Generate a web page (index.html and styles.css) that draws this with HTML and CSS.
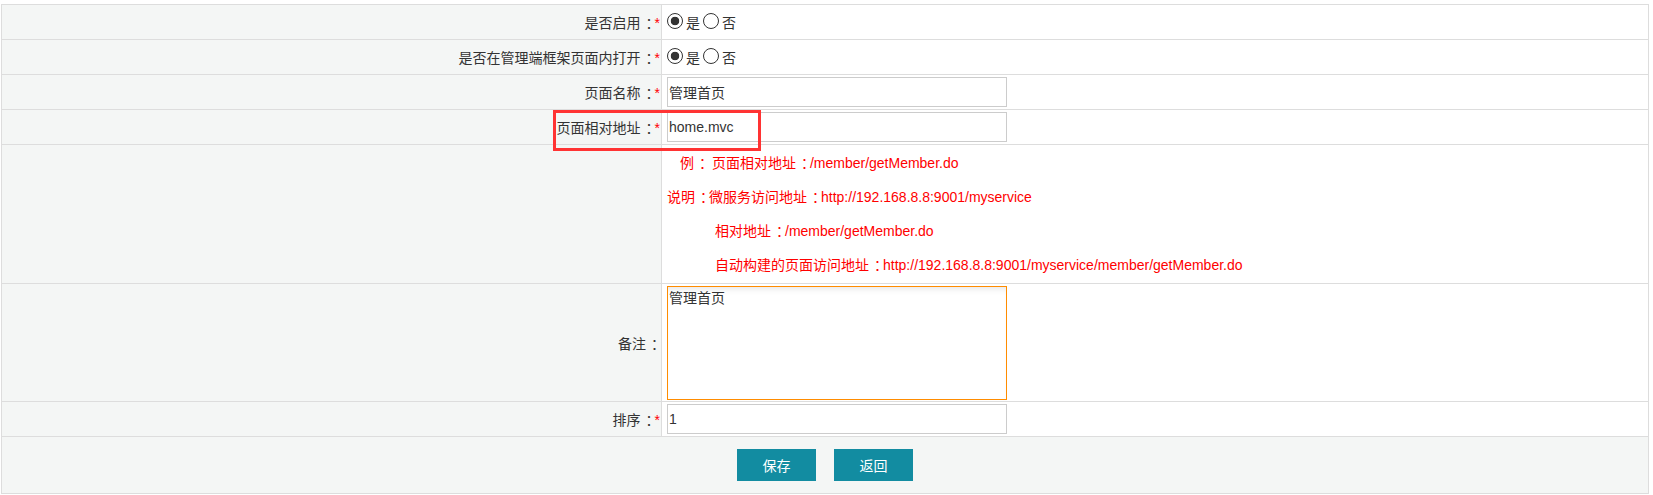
FILE: index.html
```html
<!DOCTYPE html>
<html lang="zh">
<head>
<meta charset="utf-8">
<title>页面编辑</title>
<link rel="stylesheet" href="styles.css">
</head>
<body>
<table class="form">
  <colgroup><col class="col-label"><col class="col-field"></colgroup>
  <tr>
    <th>是否启用<span class="c">：</span><em>*</em></th>
    <td><label class="opt"><input type="radio" name="enable" checked>是</label><label class="opt"><input type="radio" name="enable">否</label></td>
  </tr>
  <tr>
    <th>是否在管理端框架页面内打开<span class="c">：</span><em>*</em></th>
    <td><label class="opt"><input type="radio" name="frame" checked>是</label><label class="opt"><input type="radio" name="frame">否</label></td>
  </tr>
  <tr>
    <th>页面名称<span class="c">：</span><em>*</em></th>
    <td><input class="text" type="text" value="管理首页"></td>
  </tr>
  <tr>
    <th>页面相对地址<span class="c">：</span><em>*</em></th>
    <td><input class="text" type="text" value="home.mvc"></td>
  </tr>
  <tr class="tips">
    <th></th>
    <td>
      <div class="tip ind-1">例<span class="c">：</span> 页面相对地址<span class="c">：</span>/member/getMember.do</div>
      <div class="tip">说明<span class="c">：</span>微服务访问地址<span class="c">：</span>http://192.168.8.8:9001/myservice</div>
      <div class="tip ind-2">相对地址<span class="c">：</span>/member/getMember.do</div>
      <div class="tip ind-2">自动构建的页面访问地址<span class="c">：</span>http://192.168.8.8:9001/myservice/member/getMember.do</div>
    </td>
  </tr>
  <tr class="memo">
    <th>备注<span class="c">：</span></th>
    <td><textarea class="area">管理首页</textarea></td>
  </tr>
  <tr>
    <th>排序<span class="c">：</span><em>*</em></th>
    <td><input class="text" type="text" value="1"></td>
  </tr>
  <tr class="actions">
    <td colspan="2"><button class="btn" type="button">保存</button><button class="btn" type="button">返回</button></td>
  </tr>
</table>
<div class="highlight"></div>
</body>
</html>
```
FILE: styles.css
```css
html, body {
  background: #fff;
}
body {
  margin: 0;
  padding: 4px 4px 0 1px;
  font-family: "Liberation Sans", "Noto Sans CJK SC", sans-serif;
  font-size: 14px;
  color: #333;
}
.form {
  width: 1648px;
  border-collapse: collapse;
  table-layout: fixed;
}
.col-label {
  width: 660px;
}
.form th,
.form td {
  border: 1px solid #ddd;
  height: 34px;
  padding: 0;
  vertical-align: middle;
}
.form th {
  background: #f4f6f5;
  font-weight: normal;
  text-align: right;
  padding-right: 1px;
  white-space: nowrap;
}
.form td {
  padding-left: 5px;
  background: #fff;
}
.form em {
  font-style: normal;
  color: #f00;
}
.c {
  padding-left: 5px;
  letter-spacing: -5px;
}
.opt {
  display: inline-flex;
  align-items: center;
  margin-right: 3px;
}
.opt input {
  appearance: none;
  -webkit-appearance: none;
  width: 16px;
  height: 16px;
  margin: 0 3px 2px 0;
  border: 1px solid #333;
  border-radius: 50%;
  background: #fff;
}
.opt input:checked {
  background: radial-gradient(circle, #333 0 4px, #fff 4.6px);
}
.text {
  box-sizing: border-box;
  width: 340px;
  height: 30px;
  margin: 0;
  padding: 0 1px;
  border: 1px solid #ccc;
  font: 14px "Liberation Sans", "Noto Sans CJK SC", sans-serif;
  color: #333;
  vertical-align: middle;
  outline: none;
}
.tip {
  color: #f00;
  line-height: 34px;
  height: 34px;
  white-space: nowrap;
}
.ind-1 {
  padding-left: 13px;
}
.ind-2 {
  padding-left: 48px;
}
.tips td {
  height: 138px;
}
.memo th,
.memo td {
  height: 117px;
}
.area {
  display: block;
  box-sizing: border-box;
  width: 340px;
  height: 114px;
  margin: 1px 0 0;
  padding: 0 1px;
  border: 1px solid #ff8c00;
  font: 14px "Liberation Sans", "Noto Sans CJK SC", sans-serif;
  color: #333;
  resize: none;
  outline: none;
  box-shadow: inset 0 6px 6px -4px rgba(0, 0, 0, 0.1);
}
.actions td {
  height: 56px;
  background: #f4f6f5;
  text-align: center;
  padding: 0;
}
.btn {
  width: 79px;
  height: 32px;
  margin: 0 9px;
  border: none;
  background: #128ca1;
  color: #fff;
  font: 14px "Liberation Sans", "Noto Sans CJK SC", sans-serif;
  vertical-align: middle;
}
.highlight {
  position: absolute;
  left: 553px;
  top: 110px;
  width: 202px;
  height: 35px;
  border: 3px solid #f33;
  pointer-events: none;
}
```
